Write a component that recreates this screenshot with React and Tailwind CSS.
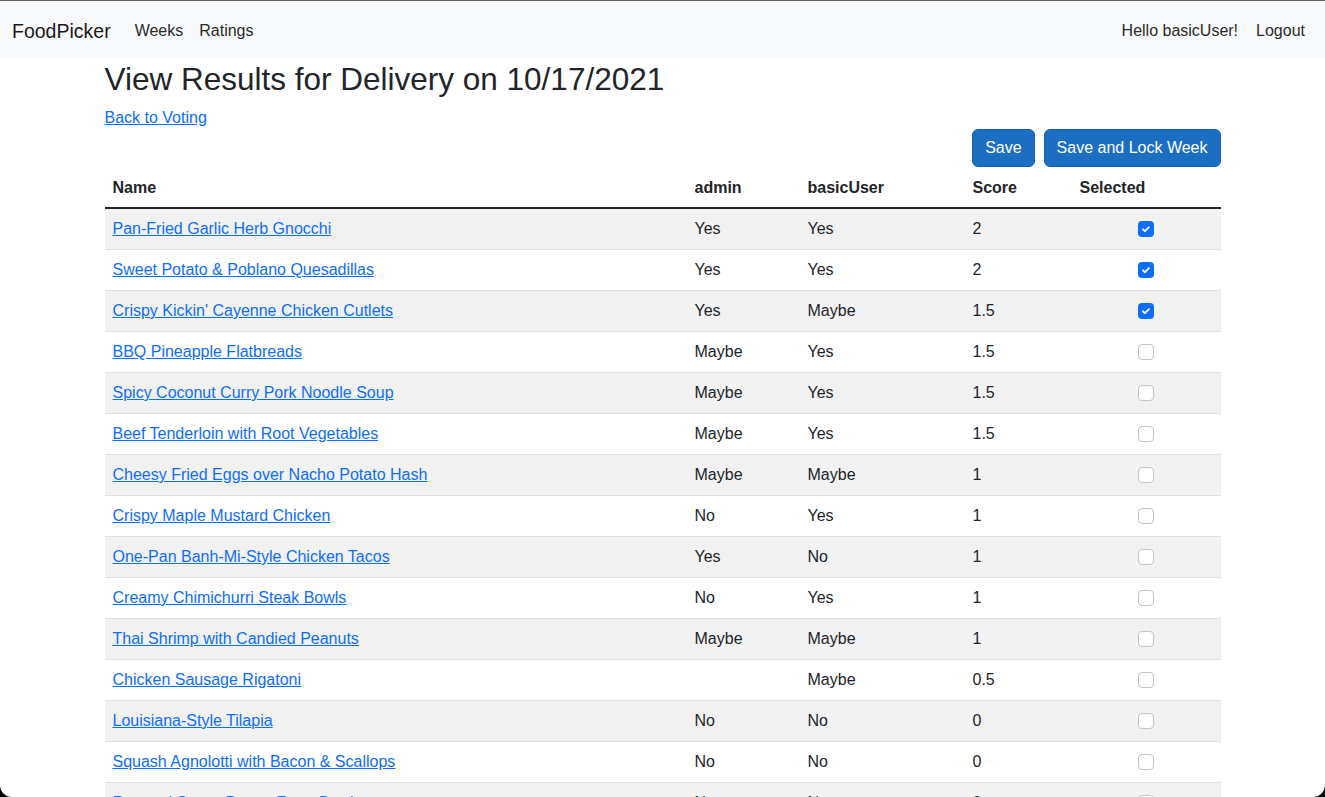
import React from 'react';

const ROWS = [
  ['Pan-Fried Garlic Herb Gnocchi', 'Yes', 'Yes', '2', true],
  ['Sweet Potato & Poblano Quesadillas', 'Yes', 'Yes', '2', true],
  ["Crispy Kickin' Cayenne Chicken Cutlets", 'Yes', 'Maybe', '1.5', true],
  ['BBQ Pineapple Flatbreads', 'Maybe', 'Yes', '1.5', false],
  ['Spicy Coconut Curry Pork Noodle Soup', 'Maybe', 'Yes', '1.5', false],
  ['Beef Tenderloin with Root Vegetables', 'Maybe', 'Yes', '1.5', false],
  ['Cheesy Fried Eggs over Nacho Potato Hash', 'Maybe', 'Maybe', '1', false],
  ['Crispy Maple Mustard Chicken', 'No', 'Yes', '1', false],
  ['One-Pan Banh-Mi-Style Chicken Tacos', 'Yes', 'No', '1', false],
  ['Creamy Chimichurri Steak Bowls', 'No', 'Yes', '1', false],
  ['Thai Shrimp with Candied Peanuts', 'Maybe', 'Maybe', '1', false],
  ['Chicken Sausage Rigatoni', '', 'Maybe', '0.5', false],
  ['Louisiana-Style Tilapia', 'No', 'No', '0', false],
  ['Squash Agnolotti with Bacon & Scallops', 'No', 'No', '0', false],
  ['Roasted Sweet Potato Farro Bowls', 'No', 'No', '0', false],
];

function Check({ on }) {
  if (on) {
    return (
      <span className="inline-flex w-4 h-4 rounded-[4px] bg-[#0d6efd] items-center justify-center align-middle -mt-[2px]">
        <svg width="12" height="12" viewBox="0 0 20 20">
          <path d="M5 10.5l3.2 3.2 6.8-6.8" fill="none" stroke="#fff" strokeWidth="3" strokeLinecap="round" strokeLinejoin="round" />
        </svg>
      </span>
    );
  }
  return <span className="inline-block w-4 h-4 rounded-[4px] border border-[#c4c4c4] bg-white align-middle -mt-[2px]" />;
}

export default function App() {
  return (
    <div className="min-h-screen bg-white text-[#212529] text-base leading-6" style={{ fontFamily: '"Liberation Sans", Arial, sans-serif' }}>
      {/* Navbar */}
      <nav className="border-t border-[#5f5f5f] bg-[#f8f9fa] h-[58px] flex items-center pt-[3px] px-3">
        <span className="text-[19.5px] leading-[30px] text-[#1a1a1a] mr-4">FoodPicker</span>
        <a className="px-2 text-[#2a2a2a]">Weeks</a>
        <a className="px-2 text-[#2a2a2a]">Ratings</a>
        <div className="ml-auto flex">
          <span className="px-2 text-[#2a2a2a]">Hello basicUser!</span>
          <a className="pl-[10px] pr-2 text-[#2a2a2a]">Logout</a>
        </div>
      </nav>

      <div className="w-[1116px] mx-auto">
        <h2 className="text-[31.5px] leading-[38px] font-medium mt-[2px] mb-2">View Results for Delivery on 10/17/2021</h2>
        <a href="#" className="text-[#0d6efd] underline">Back to Voting</a>

        <div className="flex justify-end gap-[9px] -mt-px">
          <button className="bg-[#1b6ec2] border border-[#1861ac] text-white rounded-[6px] px-3 py-[6px] leading-6">Save</button>
          <button className="bg-[#1b6ec2] border border-[#1861ac] text-white rounded-[6px] px-3 py-[6px] leading-6">Save and Lock Week</button>
        </div>

        <table className="w-full table-fixed border-collapse text-left">
          <colgroup>
            <col className="w-[582px]" />
            <col className="w-[113px]" />
            <col className="w-[165px]" />
            <col className="w-[107px]" />
            <col className="w-[149px]" />
          </colgroup>
          <thead>
            <tr className="border-b-2 border-[#212529]">
              <th className="px-2 pt-[9px] pb-[7px] font-bold">Name</th>
              <th className="px-2 pt-[9px] pb-[7px] font-bold">admin</th>
              <th className="px-2 pt-[9px] pb-[7px] font-bold">basicUser</th>
              <th className="px-2 pt-[9px] pb-[7px] font-bold">Score</th>
              <th className="px-2 pt-[9px] pb-[7px] font-bold">Selected</th>
            </tr>
          </thead>
          <tbody>
            {ROWS.map((r, i) => (
              <tr key={i} className={`border-b border-[#dee2e6] ${i % 2 === 0 ? 'bg-[#f2f2f2]' : 'bg-white'}`}>
                <td className="p-2"><a href="#" className="text-[#0d6efd] underline">{r[0]}</a></td>
                <td className="p-2">{r[1]}</td>
                <td className="p-2">{r[2]}</td>
                <td className="p-2">{r[3]}</td>
                <td className="p-2 text-center"><Check on={r[4]} /></td>
              </tr>
            ))}
          </tbody>
        </table>
      </div>

      {/* window corners */}
      <div className="fixed inset-0 pointer-events-none rounded-b-[12px] shadow-[0_0_0_30px_#000]" />
    </div>
  );
}
